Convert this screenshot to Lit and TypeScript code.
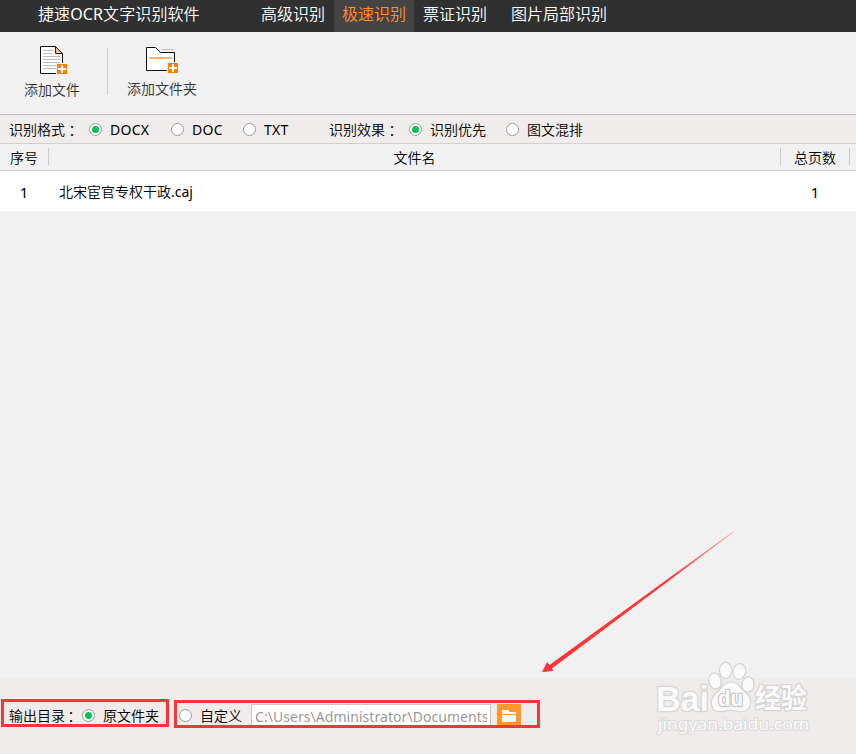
import { LitElement, html, css, svg } from "lit";
import { customElement, property, state } from "lit/decorators.js";
import { classMap } from "lit/directives/class-map.js";

@customElement("radio-item")
class RadioItem extends LitElement {
  @property() label = "";
  @property({ type: Boolean }) checked = false;
  static styles = css`
    :host { display: flex; align-items: center; flex: none; cursor: default; }
    .dot { box-sizing: border-box; width: 13px; height: 13px; border: 1px solid #999; border-radius: 50%; background: #fff; display: flex; align-items: center; justify-content: center; flex: none; }
    .fill { width: 7px; height: 7px; border-radius: 50%; background: #06c15a; }
    .label { margin: 1px 0 0 8px; white-space: nowrap; }
  `;
  render() {
    return html`<span class="dot">${this.checked ? html`<span class="fill"></span>` : ""}</span><span class="label">${this.label}</span>`;
  }
}

const plus = (x: number, y: number) => svg`
  <rect x=${x - 1} y=${y - 1} width="12" height="12" fill="#f1f1f1"/>
  <rect x=${x} y=${y} width="10" height="10" fill="#ff7d0a"/>
  <path d=${`M${x + 5} ${y + 1}v8M${x + 1} ${y + 5}h8`} stroke="#fff" stroke-width="2"/>`;

@customElement("app-root")
class AppRoot extends LitElement {
  @state() private tab = 1;
  private tabs = ["高级识别", "极速识别", "票证识别", "图片局部识别"];

  static styles = css`
    :host { display: flex; flex-direction: column; position: relative; width: 856px; height: 754px; overflow: hidden; box-sizing: border-box; background: #f1f1f1; color: #000; font: 350 14px/20px "Noto Sans", "Noto Sans CJK SC", sans-serif; }
    * { box-sizing: border-box; }
    svg { display: block; }
    .latin, .num { font-weight: 400; }
    .top { height: 32px; flex: none; display: flex; background: #303030; color: #fff; font-size: 16px; line-height: 29px; white-space: nowrap; }
    .title { width: 215px; margin-left: 38px; letter-spacing: 0.1px; }
    .tab { padding: 0 8px; }
    .tab:nth-child(3) { margin-left: 1px; }
    .tab:nth-child(4) { padding: 0 8px 0 9px; }
    .tab:nth-child(5) { margin-left: 8px; }
    .tab.on { background: #444; color: #ff9233; }
    .tools { height: 83px; flex: none; display: flex; border-bottom: 1px solid #bdbdbd; color: #333; }
    .tool { display: flex; flex-direction: column; align-items: center; padding-top: 13px; }
    .tool.file { width: 104px; }
    .tool.folder { width: 106px; }
    .tool span { line-height: 20px; margin-top: 3px; }
    .tool.folder span { margin: 2px 0 0 2px; }
    .sep { width: 1px; height: 47px; margin: 16px 0 0 3px; background: #ccc; }
    .options { height: 29px; flex: none; display: flex; align-items: center; padding: 0 0 0 9px; background: #f0eceb; border-bottom: 1px solid #d0d0d0; }
    .caption { width: 80px; flex: none; display: flex; white-space: nowrap; margin-top: 1px; }
    .colon { font-family: "Noto Sans CJK TC", sans-serif; line-height: 20px; }
    .options .latin { letter-spacing: 0.25px; }
    .r1 { width: 82px; }
    .r2 { width: 72px; }
    .r3 { width: 86px; }
    .r4 { width: 97px; }
    .head, .row { display: grid; grid-template-columns: 49px 732px 69px 6px; flex: none; align-items: center; text-align: center; }
    .head { height: 27px; border-bottom: 1px solid #d0d0d0; }
    .head span { height: 17px; line-height: 20px; border-right: 1px solid #ccc; margin-bottom: 1px; }
    .row { height: 40px; background: #fff; line-height: 41px; }
    .num { font-size: 15px; line-height: 40px; padding: 0 1px 1px 0; }
    .name { text-align: left; padding-left: 10px; line-height: 42px; }
    .body { flex: 1; }
    .footer { height: 76px; flex: none; display: flex; align-items: flex-start; background: #f0eceb; padding: 21px 0 0 1px; }
    .mark { border: 3px solid #fe3538; height: 28px; display: flex; align-items: center; overflow: hidden; flex: none; }
    .source { width: 168px; padding: 4px 0 0 5px; }
    .source .caption { width: 73px; }
    .source .colon { margin-left: -1px; }
    .custom { width: 366px; margin: 1px 0 0 5px; padding-left: 2px; align-items: flex-start; }
    .custom radio-item { width: 72px; margin-top: 2px; }
    .path { width: 240px; height: 26px; margin-top: 1px; padding: 0 3px; border: 1px solid #c6c6c6; background: #fff; color: #999; flex: none; }
    .pathtext { display: block; width: 232px; height: 22px; overflow: hidden; white-space: nowrap; line-height: 23px; letter-spacing: 0.05px; }
    .browse { width: 24px; height: 24px; margin: 1px 0 0 6px; background: #ff9733; flex: none; }
    .overlay { position: absolute; inset: 0; pointer-events: none; }
    .wm { fill: #fafafa; stroke: #d6d4d4; stroke-width: 2.6px; paint-order: stroke; stroke-linejoin: round; }
    .brand { font-family: "Liberation Sans", sans-serif; font-weight: bold; }
    .cn { font-family: "Noto Sans CJK SC", sans-serif; font-weight: bold; }
    .url { font-family: "Noto Sans", sans-serif; font-weight: 400; stroke: #dcdada; stroke-width: 2px; }
    .du { fill: #fafafa; stroke: #cbc9c9; stroke-width: 2.6px; paint-order: stroke; }
  `;

  render() {
    return html`
      <div class="top">
        <div class="title">捷速<span class="latin">OCR</span>文字识别软件</div>
        ${this.tabs.map((t, i) => html`<div class=${classMap({ tab: true, on: i === this.tab })} @click=${() => (this.tab = i)}>${t}</div>`)}
      </div>
      <div class="tools">
        <div class="tool file">
          <svg width="32" height="32" viewBox="0 0 32 32">
            <path d="M4.5 1.5h15l7 7v20h-22z" fill="#fff" stroke="#111"/>
            <path d="M19.5 1.5v7h7z" fill="#ffb87a" stroke="#222"/>
            <path d="M7 5.5h10M7 8.5h10M7 11.5h17M7 14.5h17M7 17.5h17M7 20.5h14M7 23.5h13" stroke="#bbb"/>
            ${plus(21, 19)}
          </svg><span>添加文件</span>
        </div>
        <div class="sep"></div>
        <div class="tool folder">
          <svg width="34" height="32" viewBox="0 0 34 32">
            <path d="M2.5 2.5h9l5 5h14v18h-28z" fill="#fff" stroke="#111"/>
            <path d="M18 4.5h12" stroke="#c4c4c4"/>
            <path d="M5 13h23" stroke="#ffb46e" stroke-width="2"/>
            ${plus(24, 18)}
          </svg><span>添加文件夹</span>
        </div>
      </div>
      <div class="options">
        <span class="caption">识别格式<span class="colon">：</span></span>
        <radio-item class="r1 latin" label="DOCX" checked></radio-item>
        <radio-item class="r2 latin" label="DOC"></radio-item>
        <radio-item class="r3 latin" label="TXT"></radio-item>
        <span class="caption">识别效果<span class="colon">：</span></span>
        <radio-item class="r4" label="识别优先" checked></radio-item>
        <radio-item label="图文混排"></radio-item>
      </div>
      <div class="head"><span>序号</span><span>文件名</span><span>总页数</span></div>
      <div class="row"><div class="num">1</div><div class="name">北宋宦官专权干政<span class="latin">.caj</span></div><div class="num">1</div></div>
      <div class="body"></div>
      <div class="footer">
        <div class="mark source"><span class="caption">输出目录<span class="colon">：</span></span><radio-item label="原文件夹" checked></radio-item></div>
        <div class="mark custom">
          <radio-item label="自定义"></radio-item>
          <div class="path"><span class="pathtext latin">C:\\Users\\Administrator\\Documents</span></div>
          <div class="browse"><svg width="24" height="24"><path d="M5 6h6l2 2h6v2H5zM5 11h14v7H5z" fill="#fff"/></svg></div>
        </div>
      </div>
      <svg class="overlay" width="856" height="754">
        <defs><linearGradient id="fade" gradientUnits="userSpaceOnUse" x1="734" y1="531" x2="670" y2="577">
          <stop offset="0" stop-color="#fe3538" stop-opacity=".3"/><stop offset="1" stop-color="#fe3538"/>
        </linearGradient></defs>
        <path d="M542 672L547 662L549.5 665L733 531.5L733.6 532.3L552 668.5L553.5 671Z" fill="url(#fade)"/>
        <text class="wm brand" x="656" y="711" font-size="35" textLength="53" lengthAdjust="spacingAndGlyphs">Bai</text>
        <g class="wm">
          <ellipse cx="715" cy="681" rx="5.5" ry="7.5" transform="rotate(-12 715 681)"/>
          <ellipse cx="725.7" cy="670.5" rx="5.5" ry="7.5"/>
          <ellipse cx="739.3" cy="671.5" rx="5.7" ry="7.2" transform="rotate(12 739.3 671.5)"/>
          <ellipse cx="748" cy="684.5" rx="5.4" ry="7" transform="rotate(5 748 684.5)"/>
          <path d="M731 682.5C738 682.5 740 689 744 692C753 698 752 711 741 711C736 711 734 709.5 731 709.5C727 709.5 724 711.5 719 711C710 710 710 699 717 693C722 689 724 682.5 731 682.5Z"/>
        </g>
        <text class="du brand" x="718" y="706" font-size="22" textLength="25" lengthAdjust="spacingAndGlyphs">du</text>
        <text class="wm cn" x="755" y="708" font-size="27" textLength="52" lengthAdjust="spacingAndGlyphs">经验</text>
        <text class="wm url" x="658" y="730" font-size="17" textLength="151" lengthAdjust="spacingAndGlyphs">jingyan.baidu.com</text>
      </svg>`;
  }
}
